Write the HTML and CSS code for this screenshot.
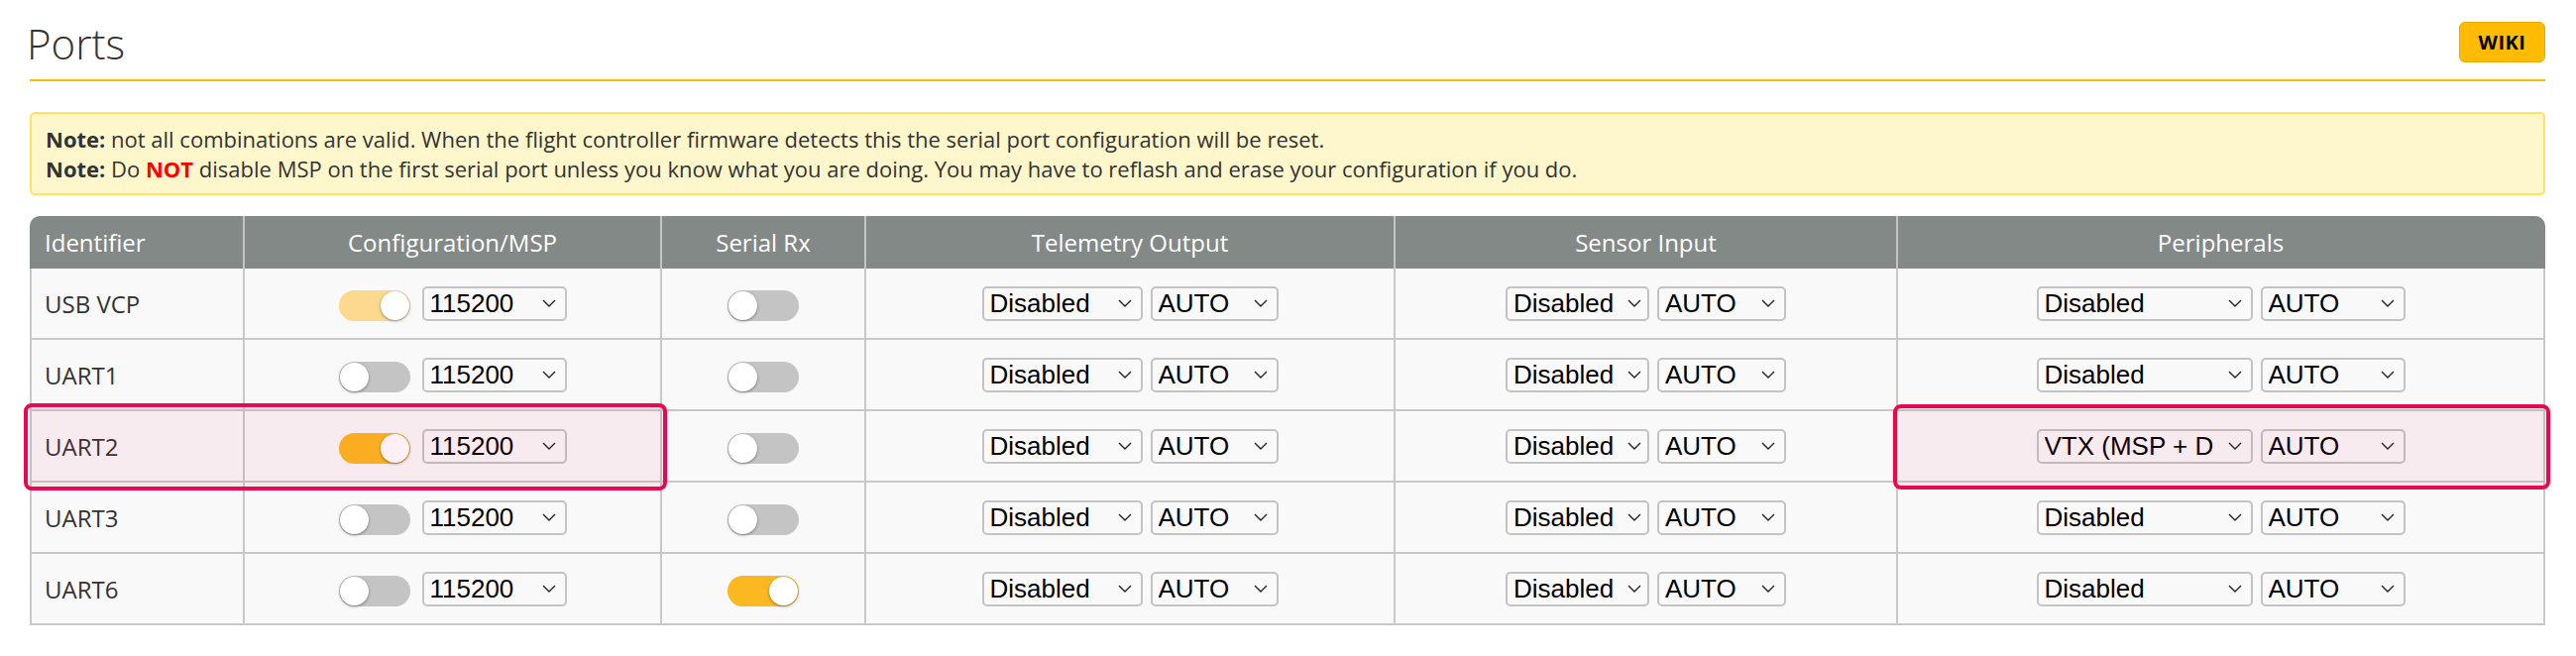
FILE: index.html
```html
<!DOCTYPE html>
<html lang="en">
<head>
<meta charset="utf-8">
<title>Ports</title>
<link rel="stylesheet" href="styles.css">
</head>
<body>
<div class="page">
  <div class="title-row">
    <h1 class="title">Ports</h1>
    <a class="wiki">WIKI</a>
  </div>
  <div class="note">
    <p><b>Note:</b> not all combinations are valid. When the flight controller firmware detects this the serial port configuration will be reset.</p>
    <p><b>Note:</b> Do <span class="red">NOT</span> disable MSP on the first serial port unless you know what you are doing. You may have to reflash and erase your configuration if you do.</p>
  </div>
  <div class="table-wrap">
    <table class="ports">
      <colgroup>
        <col class="c1"><col class="c2"><col class="c3"><col class="c4"><col class="c5"><col class="c6">
      </colgroup>
      <thead>
        <tr><th>Identifier</th><th>Configuration/MSP</th><th>Serial Rx</th><th>Telemetry Output</th><th>Sensor Input</th><th>Peripherals</th></tr>
      </thead>
      <tbody>
        <tr>
          <td>USB VCP</td>
          <td><div class="grp cfg"><span class="tg on dim"><span class="knob"></span></span><select class="sel w-baud"><option>115200</option></select></div></td>
          <td><div class="grp"><span class="tg"><span class="knob"></span></span></div></td>
          <td><div class="grp"><select class="sel w-tel"><option>Disabled</option></select><select class="sel w-auto"><option>AUTO</option></select></div></td>
          <td><div class="grp"><select class="sel w-sen"><option>Disabled</option></select><select class="sel w-auto2"><option>AUTO</option></select></div></td>
          <td><div class="grp"><select class="sel w-per"><option>Disabled</option></select><select class="sel w-auto3"><option>AUTO</option></select></div></td>
        </tr>
        <tr>
          <td>UART1</td>
          <td><div class="grp cfg"><span class="tg"><span class="knob"></span></span><select class="sel w-baud"><option>115200</option></select></div></td>
          <td><div class="grp"><span class="tg"><span class="knob"></span></span></div></td>
          <td><div class="grp"><select class="sel w-tel"><option>Disabled</option></select><select class="sel w-auto"><option>AUTO</option></select></div></td>
          <td><div class="grp"><select class="sel w-sen"><option>Disabled</option></select><select class="sel w-auto2"><option>AUTO</option></select></div></td>
          <td><div class="grp"><select class="sel w-per"><option>Disabled</option></select><select class="sel w-auto3"><option>AUTO</option></select></div></td>
        </tr>
        <tr>
          <td>UART2</td>
          <td><div class="grp cfg"><span class="tg on"><span class="knob"></span></span><select class="sel w-baud"><option>115200</option></select></div></td>
          <td><div class="grp"><span class="tg"><span class="knob"></span></span></div></td>
          <td><div class="grp"><select class="sel w-tel"><option>Disabled</option></select><select class="sel w-auto"><option>AUTO</option></select></div></td>
          <td><div class="grp"><select class="sel w-sen"><option>Disabled</option></select><select class="sel w-auto2"><option>AUTO</option></select></div></td>
          <td><div class="grp"><select class="sel w-per vtx"><option>VTX (MSP + DisplayPort)</option></select><select class="sel w-auto3"><option>AUTO</option></select></div></td>
        </tr>
        <tr>
          <td>UART3</td>
          <td><div class="grp cfg"><span class="tg"><span class="knob"></span></span><select class="sel w-baud"><option>115200</option></select></div></td>
          <td><div class="grp"><span class="tg"><span class="knob"></span></span></div></td>
          <td><div class="grp"><select class="sel w-tel"><option>Disabled</option></select><select class="sel w-auto"><option>AUTO</option></select></div></td>
          <td><div class="grp"><select class="sel w-sen"><option>Disabled</option></select><select class="sel w-auto2"><option>AUTO</option></select></div></td>
          <td><div class="grp"><select class="sel w-per"><option>Disabled</option></select><select class="sel w-auto3"><option>AUTO</option></select></div></td>
        </tr>
        <tr>
          <td>UART6</td>
          <td><div class="grp cfg"><span class="tg"><span class="knob"></span></span><select class="sel w-baud"><option>115200</option></select></div></td>
          <td><div class="grp"><span class="tg on"><span class="knob"></span></span></div></td>
          <td><div class="grp"><select class="sel w-tel"><option>Disabled</option></select><select class="sel w-auto"><option>AUTO</option></select></div></td>
          <td><div class="grp"><select class="sel w-sen"><option>Disabled</option></select><select class="sel w-auto2"><option>AUTO</option></select></div></td>
          <td><div class="grp"><select class="sel w-per"><option>Disabled</option></select><select class="sel w-auto3"><option>AUTO</option></select></div></td>
        </tr>
      </tbody>
    </table>
    <div class="mark mark-left"></div>
    <div class="mark mark-right"></div>
  </div>
</div>
</body>
</html>
```
FILE: styles.css
```css
* { box-sizing: border-box; }

body {
  margin: 0;
  background: #ffffff;
  font-family: "Open Sans", "Liberation Sans", sans-serif;
  color: #333333;
}

.page {
  padding: 16px 31px 0 30px;
}

.title-row {
  display: flex;
  justify-content: space-between;
  align-items: center;
  border-bottom: 2px solid #ffbb00;
  padding-bottom: 8px;
}

.title {
  margin: 0 0 0 -3px;
  font-size: 42px;
  font-weight: 300;
  line-height: 56px;
  color: #333333;
}

.wiki {
  display: flex;
  align-items: center;
  justify-content: center;
  width: 87px;
  height: 41px;
  margin-bottom: 3px;
  background: #ffbb00;
  border: 1px solid #e9ab00;
  border-radius: 6px;
  font-size: 20px;
  font-weight: 700;
  letter-spacing: 0.5px;
  color: #000000;
}

.note {
  margin-top: 31px;
  background: #fff7cc;
  border: 2px solid #ffe164;
  border-radius: 5px;
  padding: 10px 14px;
  font-size: 22px;
  line-height: 30px;
  color: #333333;
}

.note p { margin: 0; }
.note b { font-weight: 700; }
.note .red { color: #ff0000; font-weight: 700; }

.table-wrap {
  position: relative;
  margin-top: 21px;
}

.ports {
  width: 100%;
  border-collapse: separate;
  border-spacing: 0;
  table-layout: fixed;
}

.c1 { width: 217px; }
.c2 { width: 421px; }
.c3 { width: 206px; }
.c4 { width: 534px; }
.c5 { width: 507px; }
.c6 { width: 653px; }

.ports th {
  background: #838986;
  color: #ffffff;
  font-weight: 400;
  font-size: 24px;
  height: 53px;
  padding: 0 14px;
  text-align: center;
  border-right: 2px solid #c3c5c4;
}

.ports th:first-child {
  text-align: left;
  padding-left: 15px;
  border-top-left-radius: 10px;
}

.ports th:last-child {
  border-right: 2px solid #838986;
  border-top-right-radius: 10px;
}

.ports td {
  box-sizing: content-box;
  background: #f9f9f9;
  height: 70px;
  padding: 0 10px;
  font-size: 24px;
  color: #333333;
  text-align: center;
  vertical-align: middle;
  border-right: 2px solid #c8c8c8;
  border-bottom: 2px solid #c8c8c8;
}

.ports td:first-child {
  text-align: left;
  padding-left: 13px;
  border-left: 2px solid #c8c8c8;
}

.grp {
  display: flex;
  justify-content: center;
  align-items: center;
  gap: 8px;
}

.grp.cfg { gap: 12px; }

.tg {
  flex: none;
  display: flex;
  align-items: center;
  width: 72px;
  height: 31px;
  padding: 1px;
  margin-top: 4px;
  border-radius: 16px;
  background: #c4c4c4;
}

.tg.on {
  justify-content: flex-end;
  background: #fcb820;
}

.tg.on.dim {
  background: #fcd98f;
}

.knob {
  width: 29px;
  height: 29px;
  border-radius: 50%;
  background: #ffffff;
  box-shadow: 0 1px 3px rgba(0, 0, 0, 0.4);
}

.sel {
  -webkit-appearance: none;
  appearance: none;
  flex: none;
  height: 35px;
  margin: 0;
  padding: 0 30px 0 6px;
  font-family: "Liberation Sans", Arial, sans-serif;
  font-size: 26px;
  color: #000000;
  background: transparent url("data:image/svg+xml,%3Csvg xmlns='http://www.w3.org/2000/svg' width='14' height='8' viewBox='0 0 14 8'%3E%3Cpath d='M1 1 L7 7 L13 1' fill='none' stroke='%23222' stroke-width='1.4'/%3E%3C/svg%3E") no-repeat right 9px center;
  background-size: 14px 8px;
  border: 2px solid #c3c3c3;
  border-radius: 5px;
}

.w-baud { width: 146px; }
.w-tel { width: 162px; }
.w-auto { width: 129px; }
.w-sen { width: 145px; padding-right: 22px; background-position: right 6px center; }
.w-auto2 { width: 130px; }
.w-per { width: 218px; }
.w-per.vtx { padding-right: 38px; }
.w-auto3 { width: 146px; }

.mark {
  position: absolute;
  border: 4px solid #e8084f;
  border-radius: 8px;
  background: rgba(232, 0, 77, 0.055);
  pointer-events: none;
}

.mark-left {
  left: -6px;
  top: 189px;
  width: 649px;
  height: 88px;
}

.mark-right {
  left: 1880px;
  top: 190px;
  width: 663px;
  height: 86px;
}
```
